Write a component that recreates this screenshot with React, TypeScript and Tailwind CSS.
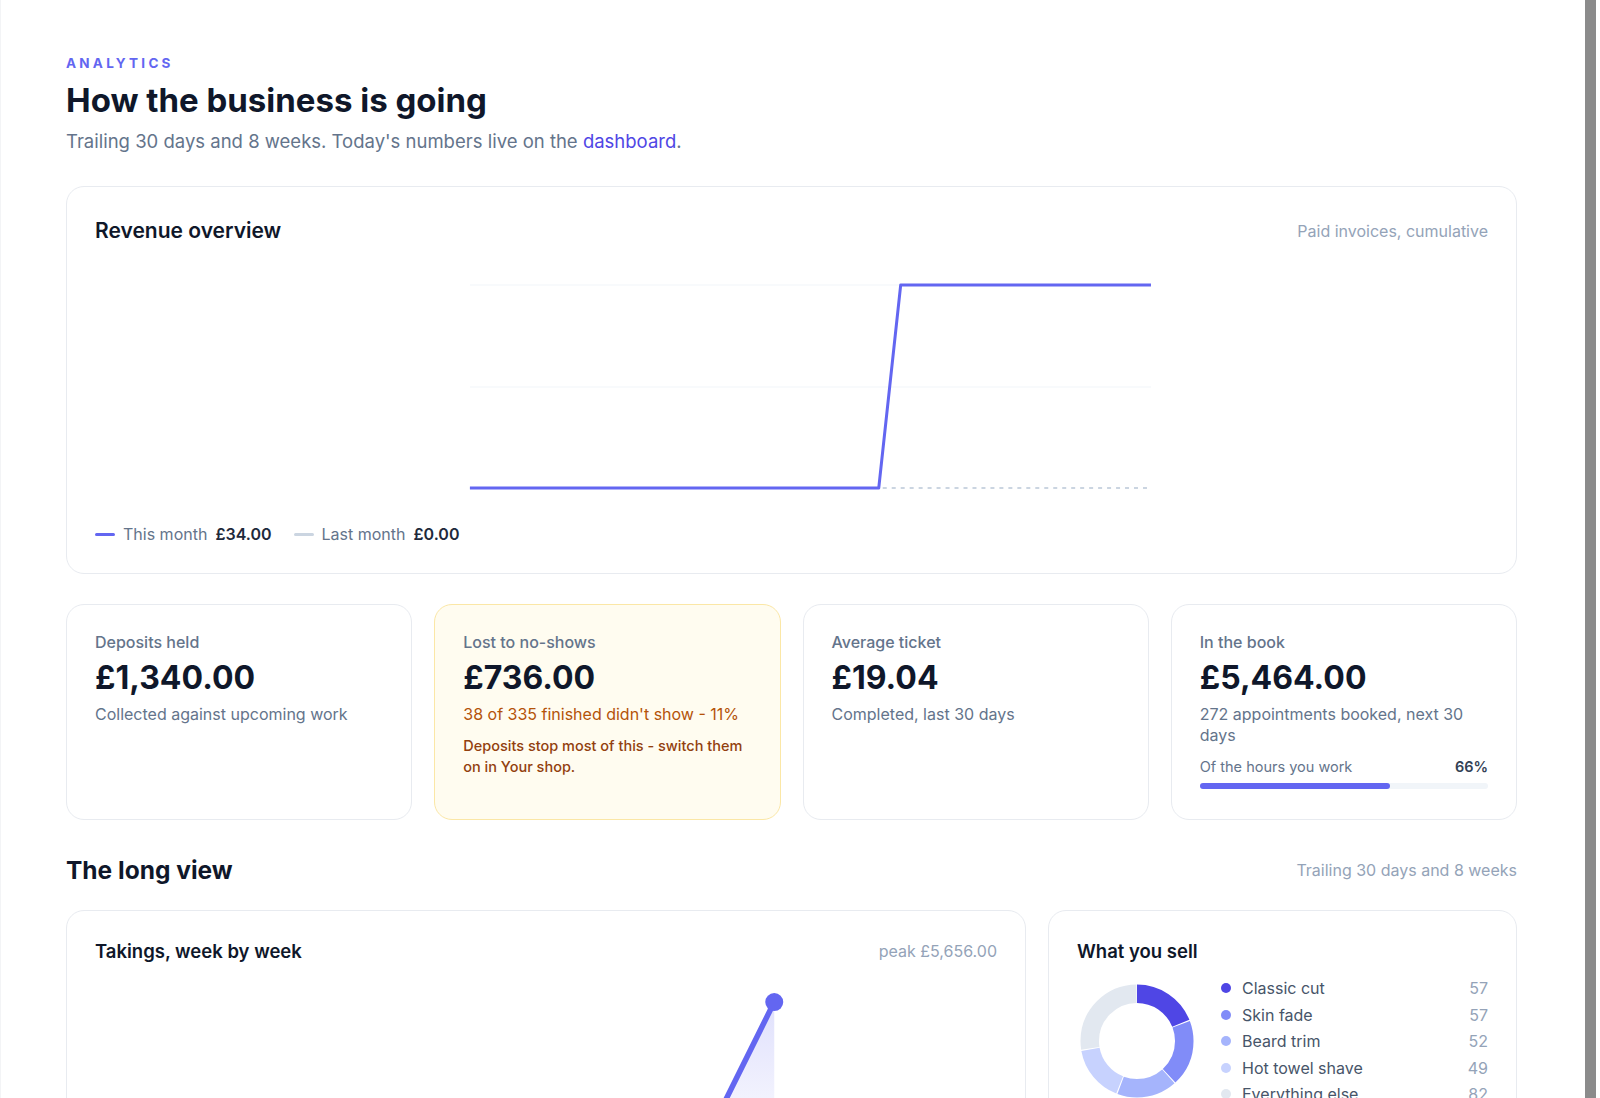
import React from 'react'

const slices = [
  { name: 'Classic cut', value: 57, color: '#4f46e5' },
  { name: 'Skin fade', value: 57, color: '#818cf8' },
  { name: 'Beard trim', value: 52, color: '#a5b4fc' },
  { name: 'Hot towel shave', value: 49, color: '#c7d2fe' },
  { name: 'Everything else', value: 82, color: '#e2e8f0' },
]

const weeks: [number, number][] = [
  [225, 160], [290, 163], [355, 158], [420, 162], [485, 156], [550, 160], [615, 154], [680, 23],
]

function RevenueChart() {
  return (
    <svg viewBox="0 0 1397 260" className="w-full h-[260px] mt-2" preserveAspectRatio="none">
      <line x1="376" y1="30" x2="1059" y2="30" stroke="#f1f5f9" strokeWidth="1" />
      <line x1="376" y1="132" x2="1059" y2="132" stroke="#f1f5f9" strokeWidth="1" />
      <line x1="376" y1="233" x2="1059" y2="233" stroke="#cbd5e1" strokeWidth="2" strokeDasharray="4 5" />
      <polyline
        points="376,233 786,233 808,30 1059,30"
        fill="none"
        stroke="#6366f1"
        strokeWidth="3"
        strokeLinejoin="round"
      />
    </svg>
  )
}

function Donut() {
  const r = 47.27
  const c = 2 * Math.PI * r
  const total = slices.reduce((s, x) => s + x.value, 0)
  let start = 0
  return (
    <svg width="120" height="120" viewBox="0 0 120 120" className="shrink-0">
      <g transform="rotate(-90 60 60)">
        {slices.map((s) => {
          const len = (s.value / total) * c
          const el = (
            <circle
              key={s.name}
              cx="60"
              cy="60"
              r={r}
              fill="none"
              stroke={s.color}
              strokeWidth="18.5"
              strokeDasharray={`${len - 1} ${c - len + 1}`}
              strokeDashoffset={-start}
            />
          )
          start += len
          return el
        })}
      </g>
    </svg>
  )
}

function TakingsChart() {
  const line = weeks.map((p, i) => `${i ? 'L' : 'M'}${p[0]},${p[1]}`).join(' ')
  const area = `${line} L680,172 L225,172 Z`
  return (
    <svg viewBox="0 0 903 200" className="w-full h-[200px] mt-4">
      <defs>
        <linearGradient id="takingsFill" x1="0" y1="0" x2="0" y2="1">
          <stop offset="0%" stopColor="#6366f1" stopOpacity="0.2" />
          <stop offset="100%" stopColor="#6366f1" stopOpacity="0.02" />
        </linearGradient>
      </defs>
      <path d={area} fill="url(#takingsFill)" />
      <path d={line} fill="none" stroke="#6366f1" strokeWidth="5.5" strokeLinejoin="round" strokeLinecap="round" />
      <circle cx="680" cy="23" r="9" fill="#6366f1" />
    </svg>
  )
}

function StatCard({ label, value, children, warn }: { label: string; value: string; children: React.ReactNode; warn?: boolean }) {
  return (
    <div
      className={
        warn
          ? 'rounded-[18px] border border-[#fbe7a6] bg-[#fffcf0] px-7 pt-[27px] pb-[30px]'
          : 'rounded-[18px] border border-[#e8ebf0] bg-white px-7 pt-[27px] pb-[30px]'
      }
    >
      <div className="text-[16px] leading-5 font-medium text-[#64748b]">{label}</div>
      <div className="mt-2 text-[32px] leading-9 font-bold text-[#0f172a]">{value}</div>
      {children}
    </div>
  )
}

export default function App() {
  return (
    <div className="flex h-screen overflow-hidden bg-white font-[Inter,sans-serif] border-l border-gray-100">
      <main className="flex-1 overflow-hidden pl-[65px] pr-[68px] pt-[55px]">
        <div className="text-[13.5px] leading-4 font-bold tracking-[0.24em] text-[#6366f1]">ANALYTICS</div>
        <h1 className="mt-2.5 text-[33px] leading-[38px] font-bold text-[#0f172a]">How the business is going</h1>
        <p className="mt-2 text-[18.5px] leading-7 text-[#64748b]">
          Trailing 30 days and 8 weeks. Today's numbers live on the{' '}
          <a href="#" className="text-[#4f46e5]">dashboard</a>.
        </p>

        <section className="mt-[31px] rounded-[18px] border border-[#e8ebf0] bg-white p-7">
          <div className="flex items-center justify-between">
            <h2 className="text-[21px] leading-8 font-semibold text-[#0f172a]">Revenue overview</h2>
            <span className="text-[16px] text-[#94a3b8]">Paid invoices, cumulative</span>
          </div>
          <RevenueChart />
          <div className="mt-2 flex items-center text-[16px] leading-[22px]">
            <span className="h-[3px] w-5 rounded-full bg-[#6366f1]" />
            <span className="ml-2 text-[#64748b]">This month</span>
            <span className="ml-2 font-semibold text-[#1e293b]">£34.00</span>
            <span className="ml-[22px] h-[3px] w-5 rounded-full bg-[#cbd5e1]" />
            <span className="ml-2 text-[#64748b]">Last month</span>
            <span className="ml-2 font-semibold text-[#1e293b]">£0.00</span>
          </div>
        </section>

        <div className="mt-[30px] grid grid-cols-4 gap-[22px]">
          <StatCard label="Deposits held" value="£1,340.00">
            <p className="mt-2 text-[16px] leading-[21px] text-[#64748b]">Collected against upcoming work</p>
          </StatCard>
          <StatCard label="Lost to no-shows" value="£736.00" warn>
            <p className="mt-2 text-[16px] leading-[21px] text-[#b45309]">38 of 335 finished didn't show - 11%</p>
            <p className="mt-2.5 text-[14.5px] leading-[21px] font-medium text-[#92400e]">
              Deposits stop most of this - switch them on in Your shop.
            </p>
          </StatCard>
          <StatCard label="Average ticket" value="£19.04">
            <p className="mt-2 text-[16px] leading-[21px] text-[#64748b]">Completed, last 30 days</p>
          </StatCard>
          <StatCard label="In the book" value="£5,464.00">
            <p className="mt-2 text-[16px] leading-[21px] text-[#64748b]">272 appointments booked, next 30 days</p>
            <div className="mt-2.5 flex items-center justify-between text-[14.5px] leading-[21px]">
              <span className="text-[#64748b]">Of the hours you work</span>
              <span className="font-semibold text-[#334155]">66%</span>
            </div>
            <div className="mt-1.5 h-1.5 rounded-full bg-[#f1f5f9]">
              <div className="h-full rounded-full bg-[#6366f1]" style={{ width: '66%' }} />
            </div>
          </StatCard>
        </div>

        <div className="mt-[34px] flex items-center justify-between">
          <h2 className="text-[24.5px] leading-8 font-bold text-[#0f172a]">The long view</h2>
          <span className="text-[16px] text-[#94a3b8]">Trailing 30 days and 8 weeks</span>
        </div>

        <div className="mt-6 grid grid-cols-3 gap-[22px]">
          <section className="col-span-2 rounded-[18px] border border-[#e8ebf0] bg-white p-7">
            <div className="flex items-center justify-between">
              <h3 className="text-[18.5px] leading-6 font-semibold text-[#0f172a]">Takings, week by week</h3>
              <span className="text-[16px] text-[#94a3b8]">peak £5,656.00</span>
            </div>
            <TakingsChart />
          </section>
          <section className="rounded-[18px] border border-[#e8ebf0] bg-white p-7">
            <h3 className="text-[18.5px] leading-6 font-semibold text-[#0f172a]">What you sell</h3>
            <div className="mt-3 flex items-center gap-6">
              <Donut />
              <ul className="flex-1">
                {slices.map((s) => (
                  <li key={s.name} className="flex items-center text-[16px] leading-[26.5px]">
                    <span className="h-2.5 w-2.5 rounded-full" style={{ backgroundColor: s.color }} />
                    <span className="ml-[11px] flex-1 text-[#475569]">{s.name}</span>
                    <span className="text-[#94a3b8]">{s.value}</span>
                  </li>
                ))}
              </ul>
            </div>
          </section>
        </div>
      </main>
      <div className="flex w-[15px] shrink-0 bg-white">
        <div className="w-[11px] bg-[#8b8b8b]" />
      </div>
    </div>
  )
}
